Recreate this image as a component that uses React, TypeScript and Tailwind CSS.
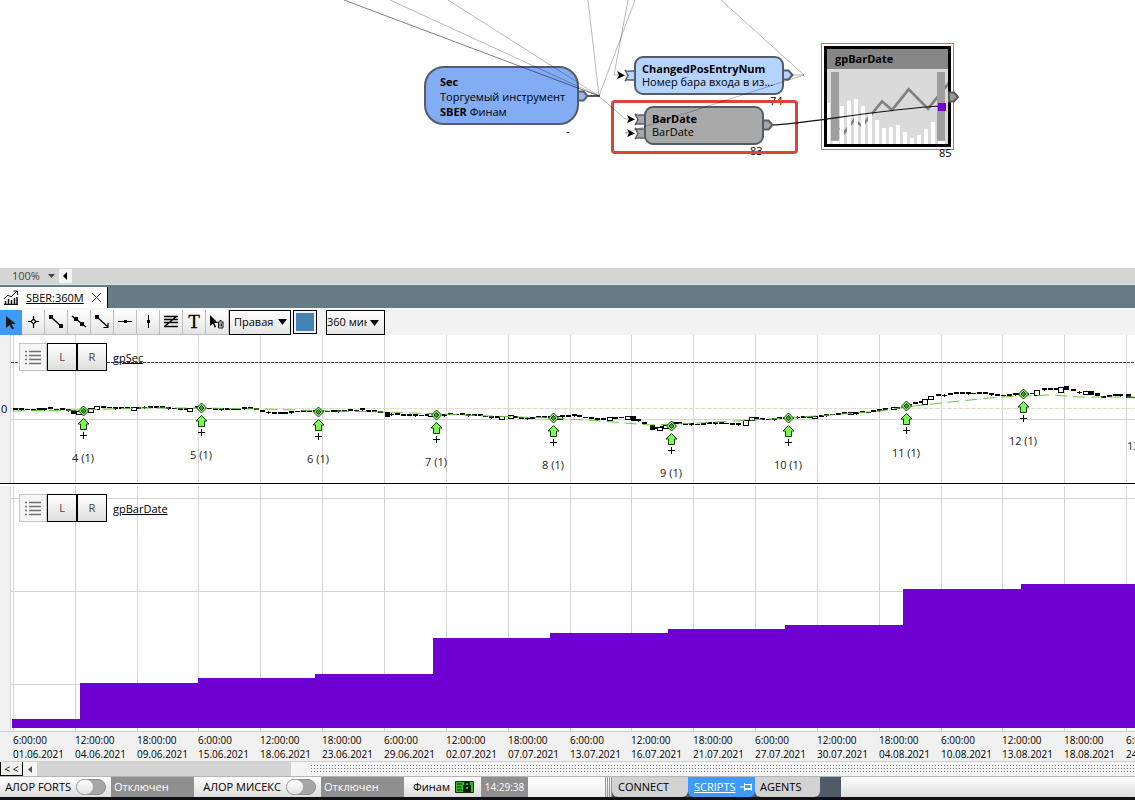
import type { ReactNode } from "react";

type Point = [number, number];

const gridX = [13, 75, 137, 198, 260, 322, 384, 446, 508, 570, 631, 693, 755, 817, 879, 941, 1002, 1064, 1126];

const dates = [
  "01.06.2021", "04.06.2021", "09.06.2021", "15.06.2021", "18.06.2021", "23.06.2021", "29.06.2021",
  "02.07.2021", "07.07.2021", "13.07.2021", "16.07.2021", "21.07.2021", "27.07.2021", "30.07.2021",
  "04.08.2021", "10.08.2021", "13.08.2021", "18.08.2021", "24.08.2021",
];
const times = ["6:00:00", "12:00:00", "18:00:00"];

// Price curve, y measured from the top of the price pane.
const price: Point[] = [
  [13, 74], [25, 74], [33, 75], [50, 73], [60, 74], [68, 75], [73, 77], [80, 77], [85, 76], [90, 74], [97, 72],
  [105, 72], [117, 73], [130, 73], [150, 72], [160, 72], [170, 73], [180, 74], [190, 74], [197, 72], [205, 73],
  [215, 74], [235, 74], [247, 73], [257, 74], [265, 77], [280, 78], [300, 76], [318, 76], [345, 76], [360, 74],
  [370, 76], [384, 77], [388, 79], [415, 80], [436, 80], [455, 79], [480, 80], [487, 82], [500, 82], [510, 81],
  [520, 83], [553, 82], [565, 81], [575, 80], [590, 83], [600, 84], [610, 83], [630, 82], [635, 84], [645, 88],
  [652, 92], [660, 93], [668, 90], [672, 88], [690, 89], [720, 88], [740, 89], [746, 87], [752, 83], [765, 84],
  [788, 83], [800, 82], [815, 82], [830, 79], [850, 78], [865, 77], [880, 75], [895, 73], [906, 71], [915, 68],
  [924, 66], [930, 62], [940, 60], [960, 58], [985, 58], [1000, 60], [1023, 59], [1030, 59], [1036, 57],
  [1045, 54], [1060, 54], [1066, 53], [1075, 56], [1083, 58], [1090, 58], [1097, 60], [1105, 62], [1115, 60],
  [1125, 60], [1129, 61], [1135, 63],
];

const hollow: [number, number, number][] = [
  [78, 77, 3], [90, 75, 4], [96, 72, 3], [133, 73, 3], [189, 74, 3], [430, 79, 3], [501, 82, 3], [510, 81, 3],
  [559, 82, 3], [609, 83, 3], [627, 82, 3], [659, 93, 3], [665, 91, 3], [745, 87, 5], [751, 83, 3], [814, 82, 2],
  [850, 78, 2], [893, 73, 2], [924, 66, 5], [930, 62, 3], [1036, 57, 5], [1060, 54, 5], [1085, 57, 3],
];
const solid: [number, number, number][] = [
  [73, 77, 4], [387, 79, 5], [633, 83, 5], [652, 92, 5], [1066, 53, 4], [1091, 58, 4], [1097, 60, 3], [1128, 61, 4],
];

const average =
  "M13 76 L80 75 L140 73 L200 73 L260 74 L330 76 L384 77 L440 79 L490 81 L550 83 L600 86 L650 90 L700 88 L770 84 L830 80 L880 76 L906 72 L950 67 L1000 62 L1050 60 L1080 62 L1135 62";

const signals = [
  { x: 83, y: 76, label: "4 (1)" },
  { x: 201, y: 73, label: "5 (1)" },
  { x: 318, y: 77, label: "6 (1)" },
  { x: 436, y: 80, label: "7 (1)" },
  { x: 553, y: 83, label: "8 (1)" },
  { x: 671, y: 91, label: "9 (1)" },
  { x: 788, y: 83, label: "10 (1)" },
  { x: 906, y: 71, label: "11 (1)" },
  { x: 1023, y: 59, label: "12 (1)" },
  { x: 1141, y: 64, label: "13 (1)" },
];

// Steps of the BarDate histogram, y measured from the top of its pane.
const steps: Point[] = [
  [12, 234], [80, 198], [198, 193], [315, 189], [433, 153], [550, 148], [668, 144], [785, 140], [903, 104], [1021, 99],
];

function priceAt(x: number) {
  for (let i = 1; i < price.length; i++) {
    const [x0, y0] = price[i - 1];
    const [x1, y1] = price[i];
    if (x <= x1) return y0 + ((y1 - y0) * (x - x0)) / (x1 - x0);
  }
  return price[price.length - 1][1];
}

function Candles() {
  const special = [...hollow, ...solid].map((c) => c[0]);
  const xs = Array.from({ length: 191 }, (_, i) => Math.round(15 + i * 5.88)).filter(
    (x) => !special.some((s) => Math.abs(s - x) < 3),
  );
  return (
    <g shapeRendering="crispEdges">
      {xs.map((x, i) => {
        const y = Math.round(priceAt(x));
        const thick = (i * 7) % 5 < 4;
        return (
          <g key={x}>
            <rect x={x - 2} y={y - (thick ? 1 : 0)} width={5} height={thick ? 2 : 1} fill="#000" />
            {i % 4 === 1 && <rect x={x} y={y - 1} width={1} height={3} fill="#000" />}
          </g>
        );
      })}
      {solid.map(([x, y, h]) => (
        <rect key={x} x={x - 2} y={y - 2} width={5} height={h} fill="#000" />
      ))}
      {hollow.map(([x, y, h]) => (
        <rect key={x} x={x - 2} y={y - Math.floor(h / 2)} width={5} height={h} fill="#fff" stroke="#000" />
      ))}
    </g>
  );
}

function Signal({ x, y, label }: { x: number; y: number; label: string }) {
  return (
    <g transform={`translate(${x} ${y})`}>
      <path d="M.5 -5 L5.5 0 L.5 5 L-4.5 0Z" fill="#8fee6d" stroke="#164a10" />
      <path d="M.5 -2.5 L3 0 L.5 2.5 L-2 0Z" fill="#4d9a3c" stroke="#123c0d" />
      <path d="M.5 7.500 L6 13 H3.500 V18.500 H-2.500 V13 H-5Z" fill="#7dfa50" stroke="#173a0e" />
      <path d="M-3 24.500 H4 M.5 21 V28" stroke="#000" shapeRendering="crispEdges" />
      <text x="0" y="51" textAnchor="middle" className="fill-[#222] text-[11px]">
        {label}
      </text>
    </g>
  );
}

function GridLines({ height }: { height: number }) {
  return (
    <g shapeRendering="crispEdges" fill="#d3d3d3">
      <rect x="10" y="0" width="1" height={height} />
      {gridX.map((x) => (
        <rect key={x} x={x} y="0" width="1" height={height} />
      ))}
    </g>
  );
}

function PaneHeader({ name }: { name: string }) {
  return (
    <div className="absolute left-[19px] top-2 flex items-center">
      <button aria-label="Список" className="flex h-7 w-7 items-center justify-center border border-[#c4c4c4] bg-[#f6f6f6]">
        <svg width="16" height="15" viewBox="0 0 16 15" stroke="#707070" strokeWidth="1.500" fill="none">
          <path d="M0 1.500h2M4 1.500h12M0 5.500h2M4 5.500h12M0 9.500h2M4 9.500h12M0 13.500h2M4 13.500h12" />
        </svg>
      </button>
      <button className="h-7 w-[30px] border border-black bg-linear-to-b from-white to-[#dedede] text-[11px] text-[#444]">L</button>
      <button className="h-7 w-[30px] border border-black bg-linear-to-b from-white to-[#dedede] text-[11px] text-[#444]">R</button>
      <a href="#pane" className="ml-1.5 mt-[2px] text-[11px] leading-4 underline">{name}</a>
    </div>
  );
}

function PricePane() {
  return (
    <section className="relative h-[148px] overflow-hidden bg-white">
      <svg className="block h-full w-full">
        <rect width="10" height="148" fill="#f0f0f0" />
        <GridLines height={148} />
        <path d="M11 84.500H4000" stroke="#d3d3d3" />
        <path d="M11 73.500H4000" stroke="#e2dccd" strokeDasharray="5 1" />
        <path d="M11 27.500H4000" stroke="#444" strokeDasharray="3 1" />
        <text x="1" y="78" className="text-[11px]">0</text>
        <Candles />
        <path d={average} stroke="#62c93c" fill="none" strokeDasharray="12 6" />
        {signals.map((s) => (
          <Signal key={s.label} {...s} />
        ))}
      </svg>
      <PaneHeader name="gpSec" />
    </section>
  );
}

function BarDatePane() {
  return (
    <section className="relative h-[245px] overflow-hidden bg-white">
      <svg className="block h-full w-full" shapeRendering="crispEdges">
        <rect width="10" height="246" fill="#f0f0f0" />
        <GridLines height={246} />
        <path d="M11 12.500H4000M11 105.500H4000M11 198.500H4000" stroke="#d3d3d3" />
        {steps.map(([x, y], i) => (
          <rect key={x} x={x} y={y - 1} width={(steps[i + 1]?.[0] ?? 4000) - x} height={243 - y} fill="#6e00d2" />
        ))}
      </svg>
      <PaneHeader name="gpBarDate" />
    </section>
  );
}

function TimeAxis() {
  return (
    <div className="flex h-[30px] overflow-hidden border-t border-[#cfcfcf] bg-[#f0f0f0] pl-[13px] pt-px text-[10px] leading-[14px]">
      {dates.map((d, i) => (
        <div key={d} className="shrink-0 whitespace-nowrap" style={{ width: (gridX[i + 1] ?? gridX[i] + 62) - gridX[i] }}>
          <div>{times[i % 3]}</div>
          <div>{d}</div>
        </div>
      ))}
    </div>
  );
}

function OutPort({ x, y, fill }: { x: number; y: number; fill: string }) {
  return <path d={`M${x} ${y - 4.5}h5.500l4 4.500l-4 4.500h-5.500z`} fill={fill} stroke="#5a5e66" strokeWidth="2" />;
}

function InPort({ x, y, fill }: { x: number; y: number; fill: string }) {
  return (
    <g>
      <path d={`M${x} ${y - 5}q3 2 5 1h6v9h-6q-3 -1 -5 1l3 -5.500z`} fill={fill} stroke="#5a5e66" strokeWidth="1.500" />
      <path d={`M${x - 8} ${y - 4}l8 4.500l-8 3.500l2 -4z`} fill="#000" />
    </g>
  );
}

function Canvas() {
  return (
    <main className="relative min-h-[268px] flex-1 overflow-hidden bg-white">
      <svg className="absolute inset-0 h-full w-full" fill="none">
        <OutPort x={578} y={96} fill="#9ab6e8" />
        <OutPort x={783} y={75} fill="#b5d3ff" />
        <OutPort x={763} y={125} fill="#a8a8a8" />
        <InPort x={625} y={75} fill="#b5d3ff" />
        <InPort x={635} y={119} fill="#a8a8a8" />
        <InPort x={635} y={133} fill="#a8a8a8" />
      </svg>

      <div className="absolute left-[424px] top-[66px] h-[59px] w-[155px] rounded-[20px] border-2 border-[#565c66] bg-[#82acf4] px-[14px] pt-[6px] text-[11px] leading-[15px] whitespace-nowrap">
        <div className="font-bold">Sec</div>
        <div>Торгуемый инструмент</div>
        <div><b>SBER</b> Финам</div>
      </div>
      <div className="absolute left-[634px] top-[56px] h-[39px] w-[150px] rounded-[9px] border-2 border-[#565c66] bg-[#b5d3ff] px-[6px] pt-[4px] text-[11px] leading-[13px] whitespace-nowrap">
        <div className="font-bold">ChangedPosEntryNum</div>
        <div>Номер бара входа в из...</div>
      </div>
      <div className="absolute left-[644px] top-[106px] h-[39px] w-[120px] rounded-[9px] border-2 border-[#565c66] bg-[#a9a9a9] px-[6px] pt-[4px] text-[11px] leading-[13px]">
        <div className="font-bold">BarDate</div>
        <div>BarDate</div>
      </div>
      <div className="absolute left-[821px] top-[43px] h-[107px] w-[133px] border border-[#4e9fbe] p-[2px]">
        <div className="flex h-full flex-col border-3 border-black">
          <div className="h-5 bg-[#868686] pl-2 text-[11px] font-bold leading-5">gpBarDate</div>
          <svg className="w-full flex-1" viewBox="81 117 363 225" preserveAspectRatio="none">
            <rect x="81" y="117" width="363" height="225" fill="#dadada" />
            <path d="M120 294L133 308L162 270L186 288L246 214L276 240L326 178L384 236L446 160" fill="none" stroke="#808080" strokeWidth="8" />
            <path
              fill="#fff"
              d="M81 218h9v124h-9zM98 334h20v8h-20zM120 228h12v114h-12zM141 212h12v130h-12zM162 207h12v135h-12zM183 228h12v114h-12zM204 250h12v92h-12zM225 270h12v72h-12zM246 294h12v48h-12zM267 290h12v52h-12zM288 285h12v57h-12zM309 306h12v36h-12zM330 324h12v18h-12zM351 315h12v27h-12zM372 297h12v45h-12zM393 276h12v66h-12zM414 334h20v8h-20z"
            />
            <path d="M93 126h24v206h-24zM411 126h24v206h-24z" fill="#9f9f9f" />
          </svg>
        </div>
      </div>

      <span className="absolute left-[566px] top-[123px] text-[11px] leading-4">-</span>
      <span className="absolute left-[770px] top-[93px] text-[11px] leading-4">74</span>
      <span className="absolute left-[750px] top-[143px] text-[11px] leading-4">83</span>
      <span className="absolute left-[939px] top-[145px] text-[11px] leading-4">85</span>
      <div className="absolute left-[611px] top-[100px] h-[54px] w-[187px] rounded-[4px] border-3 border-[#d9443b]" />

      <svg className="pointer-events-none absolute inset-0 h-full w-full" fill="none">
        <g stroke="#000" strokeOpacity=".28">
          <path d="M390 0L599 96M448 0L599 96M588 0L599 96L635 0M628 0L614 75H620M599 96L625 119H630M721 0L804 75H791M804 75L625 133H630" />
        </g>
        <path d="M344 0L599 96" stroke="#000" strokeOpacity=".5" />
        <path d="M588 96H600" stroke="#222" strokeWidth="1.500" />
        <path d="M773 125C800 125 880 109 942 106" stroke="#111" strokeWidth="1.200" />
        <rect x="938" y="103" width="8" height="8" fill="#7100d6" />
        <path d="M949 92.500h5l4 4.500l-4 4.500h-5z" fill="#999" stroke="#5a5a5a" strokeWidth="2" />
      </svg>
    </main>
  );
}

const tools: { name: string; icon: ReactNode }[] = [
  { name: "Указатель", icon: <path d="M3 1V13L6.500 10L9 14.500L11 13.500L8.500 9H13Z" fill="#1b1b1b" stroke="none" /> },
  { name: "Точка", icon: <path d="M8.500 2v3M8.500 10v4M3 7.500h3M11 7.500h3M8.500 5L11 7.500L8.500 10L6 7.500Z" strokeWidth="1.200" /> },
  { name: "Отрезок", icon: <><path d="M3 3L13 12" strokeWidth="1.500" /><path d="M1 1h4v4H1zM11 10h4v4h-4z" fill="#000" stroke="none" /></> },
  { name: "Прямая", icon: <><path d="M1 2L15 13" strokeWidth="1.500" /><path d="M3 3h4v4H3zM9 8h4v4H9z" fill="#000" stroke="none" /></> },
  { name: "Луч", icon: <><path d="M3 3L14 13M14 9V13.500H9.500" strokeWidth="1.200" /><path d="M1 1h4v4H1z" fill="#000" stroke="none" /></> },
  { name: "Горизонталь", icon: <><path d="M1 7.500h14" /><path d="M7 6h3v3H7z" fill="#000" stroke="none" /></> },
  { name: "Вертикаль", icon: <><path d="M8.500 1v13" /><path d="M7 6h3v3H7z" fill="#000" stroke="none" /></> },
  { name: "Уровни", icon: <path d="M1 2.500h14M1 5.500h14M1 8.500h14M1 12.500h14M2 12L14 2" strokeWidth="1.500" /> },
  { name: "Текст", icon: <text x="8" y="14" textAnchor="middle" className="font-['Liberation_Serif',serif] text-[19px]" fill="#000" stroke="#000" strokeWidth=".3">T</text> },
  { name: "Удалить", icon: <><path d="M1 1V12L4 9.500L5.500 13.500L7 13L5.500 9H9Z" fill="#000" stroke="none" /><path d="M8.500 8h6M10.500 6.500h2M9.500 8v6h4.500V8M11 9.500v3M12.500 9.500v3" strokeWidth=".9" /></> },
];

function Toolbar() {
  return (
    <div className="flex h-[25px] items-start bg-[#f2f2f2]">
      {tools.map((t, i) => (
        <button
          key={t.name}
          aria-label={t.name}
          className={
            i === 0
              ? "flex h-[25px] w-[22px] items-center justify-center bg-[#3f9bfb]"
              : "flex h-[25px] w-[23px] items-center justify-center border-r border-b border-[#bdbdbd] bg-linear-to-b from-white to-[#e4e4e4]"
          }
        >
          <svg className="overflow-visible" width="16" height="16" viewBox="0 0 16 16" fill="none" stroke="#000">{t.icon}</svg>
        </button>
      ))}
      <label className="relative block">
        <select aria-label="Ось" className="block h-[25px] w-[62px] appearance-none border border-black bg-linear-to-b from-white to-[#e4e4e4] pl-1 text-[11px]">
          <option>Правая</option>
        </select>
        <svg className="pointer-events-none absolute right-1 top-[9px]" width="9" height="6"><path d="M0 0h9L4.500 6z" /></svg>
      </label>
      <button aria-label="Цвет" className="ml-[2px] flex h-6 w-6 items-center justify-center border border-black bg-[#eaf1fa]">
        <span className="h-[18px] w-[18px] bg-[#4682b4]" />
      </button>
      <label className="relative ml-[9px] block">
        <select aria-label="Интервал" className="block h-[25px] w-[59px] appearance-none overflow-hidden border border-black bg-linear-to-b from-white to-[#e4e4e4] pr-[17px] text-[11px]">
          <option>360 мин</option>
        </select>
        <svg className="pointer-events-none absolute right-[6px] top-[10px]" width="9" height="6"><path d="M0 0h9L4.500 6z" /></svg>
      </label>
    </div>
  );
}

function Toggle({ label }: { label: string }) {
  return (
    <label className="flex items-center gap-[5px] whitespace-nowrap">
      {label}
      <span className="relative block h-4 w-[30px]">
        <input type="checkbox" role="switch" className="block h-4 w-[30px] appearance-none rounded-full border border-[#8d8d8d] bg-[#a6a6a6]" />
        <span className="pointer-events-none absolute left-0 top-0 h-4 w-[18px] rounded-full border border-[#aaa] bg-linear-to-b from-white to-[#e2e2e2]" />
      </span>
    </label>
  );
}

function StatusBar() {
  return (
    <footer className="flex h-[24px] items-stretch border-t border-b-3 border-t-[#b5b5b5] border-b-[#101014] bg-linear-to-b from-white to-[#dcdcdc] text-[11px]">
      <div className="flex w-[111px] items-center justify-end pr-[5px]"><Toggle label="АЛОР FORTS" /></div>
      <div className="flex w-[83px] items-center bg-[#8f8f8f] pl-[3px] text-white">Отключен</div>
      <div className="flex w-[127px] items-center justify-end pr-[5px]"><Toggle label="АЛОР МИСЕКС" /></div>
      <div className="flex w-[83px] items-center bg-[#8f8f8f] pl-[3px] text-white">Отключен</div>
      <div className="flex w-[77px] items-center justify-end gap-[5px] pr-[7px]">
        Финам
        <svg width="19" height="14" viewBox="0 0 19 14">
          <path d="M.5 1.500h18v11h-18z" fill="#36b92c" stroke="#0b2d09" />
          <path d="M2 4h5M2 7h4M2 10h5" stroke="#082706" />
          <path d="M8 5h8v7H8z" fill="#061c05" />
          <path d="M10 5V2.500h4V5" fill="none" stroke="#061c05" strokeWidth="1.500" />
          <path d="M11 7h2v2h-2z" fill="#36b92c" />
        </svg>
      </div>
      <div className="flex w-[47px] items-center justify-center bg-[#8f8f8f] text-[10px] text-white">14:29:38</div>
      <div className="w-[77px] bg-linear-to-b from-white to-[#ececec]" />
      <div className="flex w-[7px] justify-between border-x border-[#999] px-[1px]"><i className="w-px bg-[#999]" /><i className="w-px bg-[#999]" /></div>
      <nav className="flex bg-[#4f5b67] pr-[21px]">
        <button className="w-[76px] rounded-b-md bg-[#d3d3d3] pl-[6px] text-left">CONNECT</button>
        <button className="flex w-[67px] items-center gap-1 rounded-b-md bg-[#3f9bfb] pl-[6px] text-white">
          <span className="underline">SCRIPTS</span>
          <svg width="12" height="10" viewBox="0 0 12 10" fill="none" stroke="#fff"><path d="M0 5h4M4.500 1v8M5 2.500h6v4H5M5 7.500h6M11.500 1.500v7" /></svg>
        </button>
        <button className="w-[65px] rounded-b-md bg-[#d3d3d3] pl-[5px] text-left">AGENTS</button>
      </nav>
    </footer>
  );
}

export default function App() {
  return (
    <div className="flex min-h-screen flex-col overflow-hidden bg-white font-['Open_Sans','Noto_Sans',sans-serif] text-black">
      <Canvas />
      <div className="flex h-[17px] items-center border-b border-[#dce6ee] bg-[#d5d5d5]">
        <button className="flex items-center gap-2 pl-3 text-[11px] leading-4 text-[#444]">
          100%
          <svg width="7" height="4"><path d="M0 0h7L3.500 4z" fill="#444" /></svg>
        </button>
        <button aria-label="Влево" className="ml-1 flex h-[14px] w-[13px] items-center justify-center bg-[#f4f4f4]">
          <svg width="4" height="8"><path d="M4 0v8L0 4z" /></svg>
        </button>
      </div>
      <div className="flex h-[25px] border-b-2 border-[#f4f6f7] bg-[#667b83]">
        <div className="mt-[2px] flex w-[108px] items-center border-r border-black bg-white pl-1">
          <svg width="15" height="15" viewBox="0 0 15 15" fill="none" stroke="#111">
            <path d="M0 9L4 5L7 7L13 1M9.500 1H13.500V5" />
            <path d="M1.500 14v-3M4.500 14v-5M7.500 14v-4M10.500 14V8M13 14V7M0 14.500h14" strokeWidth="1.500" />
          </svg>
          <a href="#sber" className="ml-[7px] text-[11px] leading-4 underline">SBER:360M</a>
          <button aria-label="Закрыть" className="ml-auto mr-[5px]">
            <svg width="11" height="11" fill="none" stroke="#333"><path d="M1 1L10 10M10 1L1 10" /></svg>
          </button>
        </div>
      </div>
      <Toolbar />
      <PricePane />
      <div className="h-[3px] border-t border-black bg-white" />
      <BarDatePane />
      <TimeAxis />
      <div className="flex h-[15px] border-t border-[#d0d0d0] bg-[#f4f4f4]">
        <button className="w-[23px] border border-t-0 border-black bg-[#eee] text-[10px] leading-3 whitespace-nowrap">&lt; &lt;</button>
        <button aria-label="Прокрутить влево" className="flex w-[14px] items-center justify-center">
          <svg width="4" height="7"><path d="M4 0v7L0 3.500z" fill="#555" /></svg>
        </button>
        <div className="w-[254px] bg-[#d3d3d3]" />
        <div className="my-[2px] ml-[19px] flex-1 bg-[radial-gradient(circle,#777_0.6px,transparent_0.9px)] bg-size-[3px_3px]" />
      </div>
      <StatusBar />
    </div>
  );
}
